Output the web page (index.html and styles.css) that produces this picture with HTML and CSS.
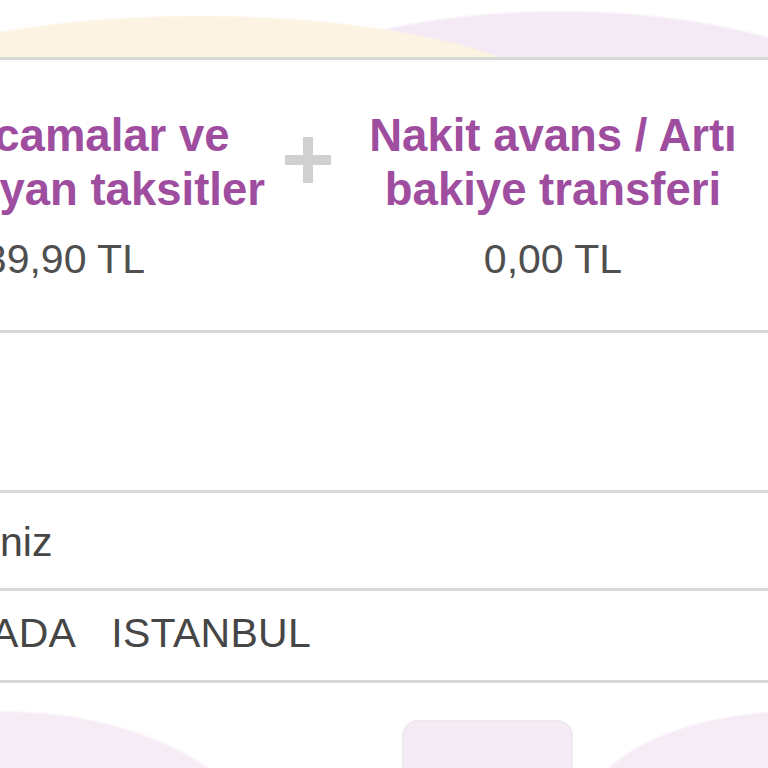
FILE: index.html
```html
<!DOCTYPE html>
<html lang="tr">
<head>
<meta charset="utf-8">
<title>Ekstre özeti</title>
<link rel="stylesheet" href="styles.css">
</head>
<body>
<div class="page">
  <div class="deco-top"></div>
  <section class="summary">
    <div class="cols">
      <div class="col col-first">
        <h2 class="col-title">Harcamalar ve yansıyan taksitler</h2>
        <div class="amount">239,90 TL</div>
      </div>
      <div class="plus">
        <svg width="46" height="46" viewBox="0 0 46 46" aria-hidden="true">
          <rect x="0" y="18" width="46" height="10" fill="#d0d0d0"/>
          <rect x="18" y="0" width="10" height="46" fill="#d0d0d0"/>
        </svg>
      </div>
      <div class="col">
        <h2 class="col-title">Nakit avans / Artı bakiye transferi</h2>
        <div class="amount">0,00 TL</div>
      </div>
    </div>
  </section>
  <div class="blank"></div>
  <div class="row row-a"><span class="cut-a">niz</span></div>
  <div class="row row-b"><span class="cut-b">ADA&nbsp;&nbsp;&nbsp;ISTANBUL</span></div>
  <div class="deco-bottom">
    <div class="tab"></div>
  </div>
</div>
</body>
</html>
```

FILE: styles.css
```css
html, body {
  margin: 0;
  padding: 0;
  background: #ffffff;
}

body {
  width: 768px;
  height: 768px;
  overflow: hidden;
  font-family: "Liberation Sans", Arial, sans-serif;
}

.page {
  width: 768px;
  height: 768px;
  display: flex;
  flex-direction: column;
  overflow: hidden;
}

.deco-top {
  height: 57px;
  flex: none;
  background:
    radial-gradient(380px 105px at 200px 120px, #fcf3e3 98%, rgba(252, 243, 227, 0) 100%),
    radial-gradient(360px 140px at 560px 150px, #f4eaf5 98%, rgba(244, 234, 245, 0) 100%);
}

.summary {
  flex: none;
  height: 270px;
  box-sizing: content-box;
  border-top: 3px solid #d8d8d8;
  border-bottom: 3px solid #d6d6d6;
  background: #ffffff;
}

.cols {
  display: flex;
  margin-left: -157px;
  padding-top: 49px;
}

.col {
  flex: none;
  width: 440px;
  text-align: center;
}

.col-title {
  margin: 0;
  font-size: 45.5px;
  line-height: 54px;
  font-weight: bold;
  color: #9e4d9f;
}

.col-first .col-title {
  padding-left: 22px;
}

.col-first .amount {
  padding-right: 20px;
}

.amount {
  margin-top: 18px;
  font-size: 41px;
  line-height: 48px;
  color: #4f4f4f;
}

.plus {
  flex: none;
  width: 50px;
  display: flex;
  justify-content: center;
  padding-top: 28px;
}

.blank {
  flex: none;
  height: 157px;
  border-bottom: 3px solid #d8d8d8;
}

.row {
  flex: none;
  font-size: 41px;
  color: #464646;
  white-space: nowrap;
}

.row-a {
  height: 98px;
  box-sizing: border-box;
  padding-top: 4px;
  line-height: 91px;
  border-bottom: 3px solid #d8d8d8;
}

.row-b {
  height: 92px;
  box-sizing: border-box;
  line-height: 84px;
  border-bottom: 3px solid #d8d8d8;
}

.cut-a {
  display: inline-block;
}

.cut-b {
  display: inline-block;
  margin-left: -9px;
  letter-spacing: 0.3px;
}

.deco-bottom {
  flex: 1;
  display: flex;
  background:
    radial-gradient(260px 140px at 0px 167px, #f6ecf6 98%, rgba(246, 236, 246, 0) 100%),
    radial-gradient(220px 110px at 800px 137px, #f6ecf6 98%, rgba(246, 236, 246, 0) 100%);
}

.tab {
  margin-left: 402px;
  margin-top: 37px;
  width: 171px;
  height: 60px;
  border-radius: 16px 16px 0 0;
  background: #f5ebf5;
  box-shadow: inset 0 0 0 2px #f0e8ef;
}
```
